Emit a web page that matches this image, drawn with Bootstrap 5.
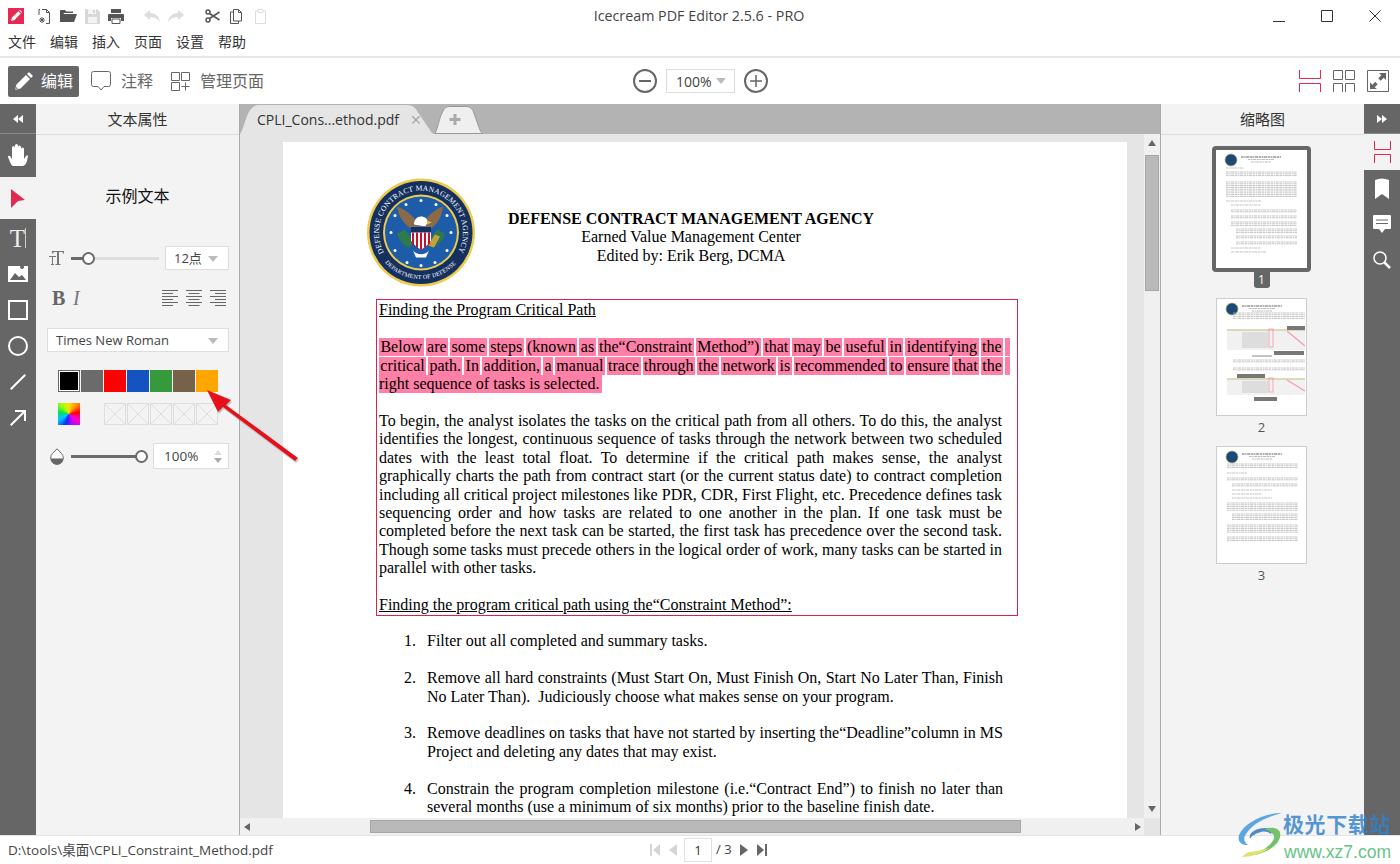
<!DOCTYPE html>
<html lang="zh-CN">
<head>
    <meta charset="UTF-8">
    <meta name="viewport" content="width=device-width, initial-scale=1.0">
    <title>Icecream PDF Editor</title>
    <link href="https://cdn.jsdelivr.net/npm/bootstrap@5.3.0/dist/css/bootstrap.min.css" rel="stylesheet">
    <style>
        html, body { height: 100%; overflow: hidden; }
        body { font-family: "Open Sans", "Noto Sans CJK SC", sans-serif; font-size: 14px; color: #333; background: #fff; }
        .app-shell { height: 864px; width: 1400px; position: relative; }
        svg { display: block; flex: none; }

        /* top */
        .top-head { height: 58px; border-bottom: 2px solid #e8e8e8; }
        .quick-row { height: 32px; padding-left: 8px; }
        .side-slot { flex: 1 1 0; }
        .app-title { font-size: 14.3px; color: #444; margin-left: 9px; }
        .win-btns { gap: 36px; padding-right: 19px; }
        .menu-row { gap: 14px; padding-left: 8px; font-size: 14px; line-height: 20px; color: #333; }
        .tool-row { height: 46px; padding: 0 11px 0 8px; }
        .edit-btn { width: 71px; height: 31px; background: #666; color: #fff; border-radius: 2px; font-size: 16px; padding-left: 6px; gap: 8px; }
        .tool-label { font-size: 16px; color: #666; }
        .zoom-minus { margin-left: 4px; }
        .zoom-sel { width: 69px; height: 24px; border: 1px solid #ddd; margin: 0 9px; padding-left: 9px; font-size: 14px; color: #444; }
        .caret-down { width: 0; height: 0; border-left: 5px solid transparent; border-right: 5px solid transparent; border-top: 6px solid #bbb; }

        /* side strips */
        .main-area { height: 731px; }
        .strip { width: 36px; background: #666; flex: none; }
        .strip-top { height: 30px; border-bottom: 1px solid #8a8a8a; }
        .strip-item { height: 36px; }
        .strip-on { background: #f3f3f3; }
        .t-glyph { font-family: "Liberation Serif", serif; font-size: 25px; line-height: 25px; color: #eee; }

        /* left panel */
        .prop-panel { width: 204px; flex: none; background: #f3f3f3; border-right: 1px solid #aaa; }
        .panel-head { height: 31px; border-bottom: 1px solid #ddd; font-size: 15px; color: #333; }
        .sample-text { margin-top: 38px; height: 45px; font-size: 16px; color: #111; }
        .prop-row { padding: 0 10px 0 11px; }
        .size-row { margin-top: 28px; height: 24px; }
        .sel-box { background: #fff; border: 1px solid #ddd; height: 24px; padding: 1px 10px 0 8px; font-size: 13px; color: #444; }
        .size-sel { width: 64px; }
        .track { height: 3px; background: #ddd; position: relative; }
        .track-fill { height: 100%; background: #6b6b6b; }
        .knob { position: absolute; top: -5px; width: 13px; height: 13px; border-radius: 50%; background: #fff; border: 2px solid #6b6b6b; }
        .style-row { margin-top: 16px; height: 24px; }
        .bold-mark { font-family: "Liberation Serif", serif; font-size: 20px; font-weight: 700; color: #666; width: 26px; padding-left: 5px; }
        .ital-mark { font-family: "Liberation Serif", serif; font-size: 20px; font-style: italic; color: #777; }
        .align-set { gap: 8px; margin-right: 3px; }
        .font-row { margin-top: 18px; }
        .swatch-rows { padding-left: 22px; }
        .swatch-line { gap: 1px; }
        .swatch-line.first-line { margin-top: 18px; }
        .swatch-line.second-line { margin-top: 11px; }
        .swatch { width: 22px; height: 22px; flex: none; }
        .swatch-picked { border: 1px solid #666; box-shadow: inset 0 0 0 1px #fff; }
        .swatch-rainbow { background: conic-gradient(#ffe000, #ff9000, #ff0000, #ff00c8, #c000ff, #0030ff, #00c8ff, #00e060, #a0ff00, #ffe000); margin-right: 23px; }
        .swatch-empty { border: 1px solid #ddd; background:
            linear-gradient(45deg, transparent 49%, #ddd 49%, #ddd 51%, transparent 51%),
            linear-gradient(-45deg, transparent 49%, #ddd 49%, #ddd 51%, transparent 51%); }
        .opacity-row { margin-top: 18px; height: 26px; }
        .pct-box { width: 76px; height: 26px; background: #fff; border: 1px solid #ddd; font-size: 13.500px; color: #444; padding: 0 6px 0 10px; }
        .spin-up { width: 0; height: 0; border-left: 4px solid transparent; border-right: 4px solid transparent; border-bottom: 5px solid #ddd; margin-bottom: 3px; }
        .spin-down { width: 0; height: 0; border-left: 4px solid transparent; border-right: 4px solid transparent; border-top: 5px solid #aaa; }

        /* document */
        .doc-col { width: 920px; flex: none; background: #e5e5e5; }
        .tab-strip { height: 30px; background: #b3b3b3; flex: none; }
        .doc-tab { width: 194px; height: 29px; margin-top: 1px; background: #e5e5e5; font-size: 14px; color: #333; padding-left: 17px;
            clip-path: path("M0 29 C4 24 6 8 12 3 C14 1 16 0 20 0 L166 0 C172 0 175 2 177 6 L190 25 C191 27 192 28 194 29 Z"); }
        .tab-close { color: #aaa; font-size: 14px; line-height: 1; margin-left: 11px; }
        .plus-tab { margin-left: 1px; margin-top: 2px; }
        .doc-mid { min-height: 0; }
        .page-view { overflow: hidden; background: #e5e5e5; padding: 8px 0 0 43px; }
        .pdf-page { width: 844px; min-height: 720px; background: #fff; font-family: "Liberation Serif", serif; font-size: 16px; line-height: 18.4px; color: #000; flex: none; }
        .letter-head { height: 157px; padding: 36px 0 0 84px; }
        .letter-lines { width: 432px; padding-top: 32px; text-align: center; }
        .letter-lines b { display: block; }
        .mark-box { margin-left: 93px; width: 642px; border: 1px solid #d9234c; padding: 1px 15px 1px 2px; }
        .first-title { margin-bottom: .6px; }
        .line-full { text-align: justify; text-align-last: justify; white-space: nowrap; }
        .line-blank { height: 18.4px; }
        .hl-line { display: flex; gap: 2px; margin-right: -8px; height: 18.4px; }
        .hl-line span { flex: 1 1 auto; background: #ff80a6; height: 18px; line-height: 18px; text-align: center; white-space: nowrap; }
        .hl-line span.hl-tail { flex: 0 0 5px; }
        .hl-short span { flex: none; padding-right: 2.3px; }
        .hl-short { gap: 0; }
        .under { text-decoration: underline; }
        .pdf-list { margin: 16px 0 0 121px; width: 599px; padding: 0; list-style: none; }
        .pdf-list li { position: relative; padding-left: 23px; margin-bottom: 18.4px; }
        .list-num { position: absolute; left: 0; }
        .vscroll { width: 16px; background: #f0f0f0; flex: none; padding-top: 6px; }
        .scroll-thumb { background: #b9b9b9; border: 1px solid #a6a6a6; }
        .vscroll .scroll-thumb { width: 14px; height: 136px; margin: 9px 0 0 1px; }
        .arr-up, .arr-down { width: 0; height: 0; border-left: 4px solid transparent; border-right: 4px solid transparent; margin-left: 4px; }
        .arr-up { border-bottom: 6px solid #666; }
        .arr-down { border-top: 6px solid #666; margin-top: auto; margin-bottom: 6px; }
        .hscroll { height: 17px; background: #f0f0f0; flex: none; }
        .hscroll .scroll-thumb { width: 651px; height: 13px; margin-left: 120px; }
        .arr-left, .arr-right { width: 0; height: 0; border-top: 4px solid transparent; border-bottom: 4px solid transparent; }
        .arr-left { border-right: 6px solid #666; margin-left: 4px; }
        .arr-right { border-left: 6px solid #666; margin-left: 114px; }
        .scroll-corner { width: 16px; background: #e5e5e5; margin-left: auto; height: 100%; }

        /* thumbnails */
        .thumb-panel { width: 204px; flex: none; background: #f3f3f3; border-left: 1px solid #aaa; }
        .thumb-list { padding: 11px 2px 0 0; }
        .thumb-frame { width: 99px; height: 126px; border: 4px solid #666; border-radius: 4px; background: #fff; }
        .thumb-flag { width: 16px; height: 16px; background: #666; color: #fff; font-size: 12px; line-height: 15px; text-align: center; border-radius: 0 0 3px 3px; margin-bottom: 10px; }
        .thumb-plain { width: 91px; height: 118px; border: 1px solid #ccc; background: #fff; }
        .thumb-num { font-size: 13px; line-height: 20px; height: 30px; color: #555; padding-top: 1px; }

        /* status */
        .status-row { height: 29px; border-top: 1px solid #e4e4e4; padding-left: 8px; font-size: 13.500px; color: #444; }
        .pager { gap: 0; margin-left: 642px; position: absolute; left: 8px; font-size: 13px; }
        .page-input { width: 28px; height: 24px; border: 1px solid #e0e0e0; text-align: center; line-height: 22px; margin: 0 4px 0 6px; color: #333; }

        /* overlays */
        .note-arrow { position: absolute; left: 200px; top: 385px; pointer-events: none; }
        .water-mark { position: absolute; left: 1238px; top: 811px; width: 160px; height: 52px; pointer-events: none; }
        .water-cn { position: absolute; left: 45px; top: 0; font-size: 21px; line-height: 26px; font-weight: 700; letter-spacing: 0.6px; color: rgba(48, 128, 205, .82); white-space: nowrap; }
        .water-en { position: absolute; left: 46px; top: 30px; font-family: "Liberation Sans", sans-serif; font-size: 17.5px; line-height: 22px; color: #66c488; white-space: nowrap; }
    </style>
</head>
<body>
<div class="app-shell d-flex flex-column">

    <div class="top-head">
        <div class="quick-row d-flex align-items-center">
            <div class="side-slot d-flex align-items-center">
                <svg width="16" height="16" viewBox="0 0 16 16"><rect width="16" height="16" fill="#e8294f"/><path d="M3 13l.8-3.2 6.6-6.6 2.4 2.4-6.6 6.6z" fill="#fff"/><path d="M11 2.6l1-1 2.400 2.400-1 1z" fill="#fbd"/></svg>
                <svg style="margin-left:14px" width="12" height="15" viewBox="0 0 12 15" fill="none" stroke="#555"><path d="M4 .5h4.500L11.500 3.500V14.500H8M1 6V.5h1M11.500 3.500H8.500V.5"/><path d="M4 8v6M1 11h6M2 9l4 4M6 9l-4 4" stroke-width="1"/></svg>
                <svg style="margin-left:10px" width="17" height="14" viewBox="0 0 17 14"><path d="M0 13V1.500Q0 1 .5 1H5l1.500 1.500H13V4H4L1.200 10 3.500 5H17l-3 8z" fill="#555"/></svg>
                <svg style="margin-left:8px" width="15" height="15" viewBox="0 0 15 15"><path d="M0 0h12l3 3v12H0z" fill="#d8d8d8"/><path d="M3 0h8v5H3zM3 8h9v6H3z" fill="#f4f4f4"/><path d="M8 1h2v3H8z" fill="#d8d8d8"/></svg>
                <svg style="margin-left:8px" width="16" height="15" viewBox="0 0 16 15"><path d="M3 0h10v4H3zM1 5h14q1 0 1 1v6h-3V9H3v3H0V6q0-1 1-1z" fill="#555"/><path d="M4 10h8v4.500H4z" fill="none" stroke="#555"/></svg>
                <svg style="margin-left:20px" width="16" height="12" viewBox="0 0 16 12"><path d="M6 0L0 5l6 5V7c4 0 7 1 10 5C15 6 11 3 6 3z" fill="#ddd"/></svg>
                <svg style="margin-left:8px" width="16" height="12" viewBox="0 0 16 12"><path d="M10 0l6 5-6 5V7C6 7 3 8 0 12 1 6 5 3 10 3z" fill="#ddd"/></svg>
                <svg style="margin-left:21px" width="15" height="14" viewBox="0 0 15 14" fill="none" stroke="#555" stroke-width="1.500"><circle cx="3" cy="3" r="2"/><circle cx="3" cy="11" r="2"/><path d="M4.500 4.500L14.500 11M4.500 9.500L14.500 3"/></svg>
                <svg style="margin-left:10px" width="12" height="15" viewBox="0 0 12 15" fill="none" stroke="#555"><path d="M3.500 .5h5l3 3v8.500h-8zM8.500 .5v3h3M3.500 3H.5v11.500h8V12"/></svg>
                <svg style="margin-left:13px" width="11" height="15" viewBox="0 0 11 15" fill="none" stroke="#ddd"><path d="M3 2H.5v12.500h10V2H8M3 .5h5V3.500H3z"/></svg>
            </div>
            <div class="app-title">Icecream PDF Editor 2.5.6 - PRO</div>
            <div class="side-slot d-flex justify-content-end win-btns align-items-center">
                <svg width="12" height="12" viewBox="0 0 12 12"><path d="M0 11.500h12" stroke="#333"/></svg>
                <svg width="12" height="12" viewBox="0 0 12 12"><path d="M.5.5h11v11H.5z" fill="none" stroke="#333"/></svg>
                <svg width="12" height="12" viewBox="0 0 12 12"><path d="M.5.5l11 11M11.500.5l-11 11" stroke="#333"/></svg>
            </div>
        </div>
        <div class="menu-row d-flex"><span>文件</span><span>编辑</span><span>插入</span><span>页面</span><span>设置</span><span>帮助</span></div>
    </div>

    <div class="tool-row d-flex align-items-center">
        <div class="side-slot d-flex align-items-center">
            <div class="edit-btn d-flex align-items-center">
                <svg width="19" height="19" viewBox="0 0 19 19"><path d="M1 18l1.500-5.500L12 3l4 4-9.500 9.500z" fill="#fff"/><path d="M13 2l1.500-1.500q.5-.5 1 0l3 3q.5.5 0 1L17 6z" fill="#fff"/><path d="M1 18l1-3.500 2.500 2.500z" fill="#999"/></svg>
                <span>编辑</span>
            </div>
            <svg style="margin-left:12px" width="20" height="20" viewBox="0 0 20 20" fill="none" stroke="#666"><path d="M2.500.5h15q2 0 2 2v11q0 2-2 2h-4.500L10 19 7 15.500H2.500q-2 0-2-2v-11q0-2 2-2z"/></svg>
            <span class="tool-label" style="margin-left:10px">注释</span>
            <svg style="margin-left:18px" width="19" height="19" viewBox="0 0 19 19" fill="none" stroke="#666"><path d="M.5.5h8v8h-8zM10.500.5h8v8h-8zM.5 10.500h8v8h-8zM14.500 10.500v8M10.500 14.500h8"/></svg>
            <span class="tool-label" style="margin-left:10px">管理页面</span>
        </div>
        <svg class="zoom-minus" width="24" height="24" viewBox="0 0 24 24" fill="none" stroke="#666" stroke-width="2"><circle cx="12" cy="12" r="11"/><path d="M6 12h12"/></svg>
        <div class="zoom-sel d-flex align-items-center justify-content-between pe-2"><span>100%</span><span class="caret-down"></span></div>
        <svg width="24" height="24" viewBox="0 0 24 24" fill="none" stroke="#666" stroke-width="2"><circle cx="12" cy="12" r="11"/><path d="M12 6v12M6 12h12" stroke-width="1.500"/></svg>
        <div class="side-slot d-flex justify-content-end align-items-center gap-2">
            <svg width="22" height="22" viewBox="0 0 22 22" fill="none" stroke="#e2294f"><path d="M.5 0v8.500h21V0M.5 22v-8.500h21V22"/></svg>
            <svg style="margin-left:4px" width="22" height="22" viewBox="0 0 22 22" fill="none" stroke="#666"><path d="M.5.5h9v9h-9zM12.500.5h9v9h-9zM.5 22v-8.500h9V22M12.500 22v-8.500h9V22"/></svg>
            <svg style="margin-left:4px" width="22" height="22" viewBox="0 0 22 22"><path d="M.5.5h21v21H.5z" fill="none" stroke="#666"/><path d="M12 3h7v7l-2.300-2.300-3 3-2.400-2.400 3-3zM3 19v-6.500l2.300 2.300 3-3 2.400 2.400-3 3L10 19z" fill="#666"/></svg>
        </div>
    </div>

    <div class="main-area d-flex">
        <!-- left tool strip -->
        <div class="strip">
            <div class="strip-top d-flex align-items-center justify-content-center">
                <svg width="10" height="8" viewBox="0 0 10 8"><path d="M5 0v8L0 4zM10 0v8L5 4z" fill="#fff"/></svg>
            </div>
            <div class="d-flex align-items-center justify-content-center" style="height:43px">
                <svg width="20" height="23" viewBox="0 0 20 23"><path d="M5 22q-2-1-3-4L0 13q0-2 2-1l2 3V4q0-2 1.500-2T7 4V1.500Q7 0 8.500 0T10 1.500V3q0-1.500 1.500-1.500T13 3v2q0-1.500 1.500-1.500T16 5v10l2-3q1.500-1.500 2 0l-1 5q-1 4-4 5z" fill="#fff"/></svg>
            </div>
            <div class="strip-on d-flex align-items-center justify-content-center" style="height:42px">
                <svg width="14" height="19" viewBox="0 0 14 19"><path d="M0 0l14 11-7 1-7 7z" fill="#e2294f"/></svg>
            </div>
            <div class="strip-item d-flex align-items-center justify-content-center" style="margin-top:1px"><span class="t-glyph">T</span><svg width="1" height="20"><path d="M.5 0v20" stroke="#ccc"/></svg></div>
            <div class="strip-item d-flex align-items-center justify-content-center">
                <svg width="20" height="16" viewBox="0 0 20 16"><path d="M0 0h20v16H0z" fill="#fff"/><path d="M2 14l5-7 4 4 3-2 4 5zM14 3a2 2 0 1 1 .1 0z" fill="#666"/></svg>
            </div>
            <div class="strip-item d-flex align-items-center justify-content-center">
                <svg width="20" height="20" viewBox="0 0 20 20"><path d="M1 1h18v18H1z" fill="none" stroke="#fff" stroke-width="2"/></svg>
            </div>
            <div class="strip-item d-flex align-items-center justify-content-center">
                <svg width="20" height="20" viewBox="0 0 20 20"><circle cx="10" cy="10" r="9" fill="none" stroke="#fff" stroke-width="2"/></svg>
            </div>
            <div class="strip-item d-flex align-items-center justify-content-center">
                <svg width="16" height="16" viewBox="0 0 16 16"><path d="M.7 15.300L15.300.7" stroke="#fff" stroke-width="2"/></svg>
            </div>
            <div class="strip-item d-flex align-items-center justify-content-center">
                <svg width="16" height="16" viewBox="0 0 16 16" fill="none" stroke="#fff" stroke-width="2"><path d="M.7 15.300L14.500 1.500M5 1h10v10"/></svg>
            </div>
        </div>

        <!-- text properties -->
        <div class="prop-panel">
            <div class="panel-head d-flex align-items-center justify-content-center">文本属性</div>
            <div class="sample-text d-flex align-items-center justify-content-center">示例文本</div>
            <div class="prop-row size-row d-flex align-items-center">
                <svg width="16" height="14" viewBox="0 0 16 14" style="margin-left:2px"><path d="M3 0h12v2.500h-1L13.500 1H10v12h1.500v1h-5v-1H8V1H5L4 2.500H3zM0 5h7v1H4v7h1v1H2v-1h1V6H0z" fill="#777"/></svg>
                <div class="track" style="width:88px;margin-left:6px"><div class="track-fill" style="width:17px"></div><div class="knob" style="left:11px"></div></div>
                <div class="sel-box size-sel d-flex align-items-center justify-content-between ms-auto"><span>12点</span><span class="caret-down"></span></div>
            </div>
            <div class="prop-row style-row d-flex align-items-center">
                <span class="bold-mark">B</span><span class="ital-mark">I</span>
                <div class="align-set d-flex ms-auto">
                    <svg width="16" height="16" viewBox="0 0 16 16"><path d="M0 .5h16M0 3.500h11M0 6.500h16M0 9.500h11M0 12.500h16M0 15.500h11" stroke="#666"/></svg>
                    <svg width="16" height="16" viewBox="0 0 16 16"><path d="M0 .5h16M2.500 3.500h11M0 6.500h16M2.500 9.500h11M0 12.500h16M2.500 15.500h11" stroke="#666"/></svg>
                    <svg width="16" height="16" viewBox="0 0 16 16"><path d="M0 .5h16M5 3.500h11M0 6.500h16M5 9.500h11M0 12.500h16M5 15.500h11" stroke="#666"/></svg>
                </div>
            </div>
            <div class="prop-row font-row">
                <div class="sel-box d-flex align-items-center justify-content-between"><span>Times New Roman</span><span class="caret-down"></span></div>
            </div>
            <div class="swatch-rows">
                <div class="swatch-line first-line d-flex">
                    <div class="swatch swatch-picked" style="background-color:#000"></div>
                    <div class="swatch" style="background-color:#6b6b6b"></div>
                    <div class="swatch" style="background-color:#ff0000"></div>
                    <div class="swatch" style="background-color:#1554c0"></div>
                    <div class="swatch" style="background-color:#369a3c"></div>
                    <div class="swatch" style="background-color:#76624a"></div>
                    <div class="swatch" style="background-color:#ffa500"></div>
                </div>
                <div class="swatch-line second-line d-flex">
                    <div class="swatch swatch-rainbow"></div>
                    <div class="swatch swatch-empty"></div>
                    <div class="swatch swatch-empty"></div>
                    <div class="swatch swatch-empty"></div>
                    <div class="swatch swatch-empty"></div>
                    <div class="swatch swatch-empty"></div>
                </div>
            </div>
            <div class="prop-row opacity-row d-flex align-items-center">
                <svg width="14" height="17" viewBox="0 0 14 17" style="margin-left:3px"><path d="M7 .8L2.500 5.500A6.300 6.300 0 1 0 11.500 5.500z" fill="#fff" stroke="#666"/><path d="M.8 10.500a6.200 6.200 0 0 0 12.400 0z" fill="#666"/></svg>
                <div class="track" style="width:70px;margin-left:7px;background:#6b6b6b"><div class="knob" style="left:64px"></div></div>
                <div class="pct-box d-flex align-items-center justify-content-between ms-auto"><span>100%</span><span class="d-flex flex-column"><span class="spin-up"></span><span class="spin-down"></span></span></div>
            </div>
        </div>

        <!-- document -->
        <div class="doc-col d-flex flex-column">
            <div class="tab-strip d-flex">
                <div class="doc-tab d-flex align-items-center"><span>CPLI_Cons...ethod.pdf</span><span class="tab-close">✕</span></div>
                <svg class="plus-tab" width="48" height="28" viewBox="0 0 48 28"><path d="M0 27.500C3 22 4 12 8 5 10 1 12 .5 16 .5h15c3 0 5 1 7 4l6 17c1 3 2 5 4 6z" fill="#efefef" stroke="#999"/><path d="M14.500 13.500h11M20 8v11" stroke="#aaa" stroke-width="3"/></svg>
            </div>
            <div class="doc-mid d-flex flex-grow-1">
                <div class="page-view flex-grow-1">
                    <div class="pdf-page">
                        <div class="letter-head d-flex">
                            <svg width="108" height="109" viewBox="0 0 108 108">
                                <defs>
                                    <path id="sealTop" d="M17 74A42 42 0 1 1 91 74"/>
                                    <path id="sealBottom" d="M18 84A47.500 47.500 0 0 0 90 84"/>
                                </defs>
                                <circle cx="54" cy="54" r="54" fill="#eccb4e"/>
                                <circle cx="54" cy="54" r="51.500" fill="#14305f"/>
                                <circle cx="54" cy="54" r="38" fill="#eccb4e"/>
                                <circle cx="54" cy="54" r="36" fill="#1c5ca8"/>
                                <text font-family="Liberation Serif, serif" font-size="7.600" fill="#fff"><textPath href="#sealTop" textLength="172" lengthAdjust="spacing">DEFENSE CONTRACT MANAGEMENT AGENCY</textPath></text>
                                <text font-family="Liberation Serif, serif" font-size="6" fill="#fff"><textPath href="#sealBottom" textLength="80" lengthAdjust="spacing">DEPARTMENT OF DEFENSE</textPath></text>
                                <g fill="#fff">
                                    <circle cx="54" cy="22" r="1.500"/><circle cx="39" cy="26" r="1.500"/><circle cx="69" cy="26" r="1.500"/><circle cx="28" cy="37" r="1.500"/><circle cx="80" cy="37" r="1.500"/><circle cx="24" cy="54" r="1.500"/><circle cx="84" cy="54" r="1.500"/><circle cx="28" cy="72" r="1.500"/><circle cx="80" cy="72" r="1.500"/><circle cx="40" cy="84" r="1.500"/><circle cx="68" cy="84" r="1.500"/><circle cx="54" cy="87" r="1.500"/>
                                </g>
                                <path d="M50 52C42 50 33 44 30 28c7 2 18 10 21 18zM58 52c8-2 16-8 18-24-7 2-17 10-20 18z" fill="#8a6a48"/>
                                <path d="M30 55c2 7 7 13 13 14l4-5-9-13zM78 55c-2 7-7 13-13 14l-4-5 9-13z" fill="#2f7a4a"/>
                                <path d="M68 56l-7 11 6 2 6-11z" fill="#c4a23a"/>
                                <path d="M47 46c0-5 3-8 7-8s6 2 7 6l-3 4z" fill="#fff"/>
                                <path d="M60 42l5 2-5 2z" fill="#e2b838"/>
                                <path d="M44 48h20v14q-4 6-10 9-6-3-10-9z" fill="#fff"/>
                                <path d="M44 48h20v6H44z" fill="#14305f"/>
                                <path d="M46 54v12M50 54v15M54 54v17M58 54v15M62 54v12" stroke="#c8102e" stroke-width="2"/>
                                <path d="M46 72c4 5 12 5 16 0l-3 7h-10z" fill="#fff"/>
                            </svg>
                            <div class="letter-lines"><b>DEFENSE CONTRACT MANAGEMENT AGENCY</b>Earned Value Management Center<br>Edited by: Erik Berg, DCMA</div>
                        </div>
                        <div class="mark-box">
                            <div class="under first-title">Finding the Program Critical Path</div>
                            <div class="line-blank"></div>
                            <div class="hl-line"><span>Below</span><span>are</span><span>some</span><span>steps</span><span>(known</span><span>as</span><span>the“Constraint</span><span>Method”)</span><span>that</span><span>may</span><span>be</span><span>useful</span><span>in</span><span>identifying</span><span>the</span><span class="hl-tail"></span></div>
                            <div class="hl-line"><span>critical</span><span>path.</span><span>In</span><span>addition,</span><span>a</span><span>manual</span><span>trace</span><span>through</span><span>the</span><span>network</span><span>is</span><span>recommended</span><span>to</span><span>ensure</span><span>that</span><span>the</span><span class="hl-tail"></span></div>
                            <div class="hl-line hl-short"><span>right sequence of tasks is selected.</span></div>
                            <div class="line-blank"></div>
                            <div class="line-full">To begin, the analyst isolates the tasks on the critical path from all others. To do this, the analyst</div>
                            <div class="line-full">identifies the longest, continuous sequence of tasks through the network between two scheduled</div>
                            <div class="line-full">dates with the least total float. To determine if the critical path makes sense, the analyst</div>
                            <div class="line-full">graphically charts the path from contract start (or the current status date) to contract completion</div>
                            <div class="line-full">including all critical project milestones like PDR, CDR, First Flight, etc. Precedence defines task</div>
                            <div class="line-full">sequencing order and how tasks are related to one another in the plan. If one task must be</div>
                            <div class="line-full">completed before the next task can be started, the first task has precedence over the second task.</div>
                            <div class="line-full">Though some tasks must precede others in the logical order of work, many tasks can be started in</div>
                            <div>parallel with other tasks.</div>
                            <div class="line-blank"></div>
                            <div class="under">Finding the program critical path using the“Constraint Method”:</div>
                        </div>
                        <ol class="pdf-list">
                            <li><span class="list-num">1.</span>Filter out all completed and summary tasks.</li>
                            <li><span class="list-num">2.</span><div class="line-full">Remove all hard constraints (Must Start On, Must Finish On, Start No Later Than, Finish</div><div>No Later Than).&nbsp; Judiciously choose what makes sense on your program.</div></li>
                            <li><span class="list-num">3.</span><div class="line-full">Remove deadlines on tasks that have not started by inserting the“Deadline”column in MS</div><div>Project and deleting any dates that may exist.</div></li>
                            <li><span class="list-num">4.</span><div class="line-full">Constrain the program completion milestone (i.e.“Contract End”) to finish no later than</div><div>several months (use a minimum of six months) prior to the baseline finish date.</div></li>
                        </ol>
                    </div>
                </div>
                <div class="vscroll d-flex flex-column">
                    <div class="arr-up"></div>
                    <div class="scroll-thumb"></div>
                    <div class="arr-down"></div>
                </div>
            </div>
            <div class="hscroll d-flex align-items-center">
                <div class="arr-left"></div>
                <div class="scroll-thumb"></div>
                <div class="arr-right"></div>
                <div class="scroll-corner"></div>
            </div>
        </div>

        <!-- thumbnails -->
        <div class="thumb-panel">
            <div class="panel-head d-flex align-items-center justify-content-center">缩略图</div>
            <div class="thumb-list d-flex flex-column align-items-center">
                <div class="thumb-frame"><svg class="thumb-svg" data-page="1" width="91" height="118" viewBox="0 0 91 118"></svg></div>
                <div class="thumb-flag">1</div>
                <div class="thumb-plain"><svg class="thumb-svg" data-page="2" width="89" height="116" viewBox="0 0 89 116"></svg></div>
                <div class="thumb-num">2</div>
                <div class="thumb-plain"><svg class="thumb-svg" data-page="3" width="89" height="116" viewBox="0 0 89 116"></svg></div>
                <div class="thumb-num">3</div>
            </div>
        </div>

        <!-- right strip -->
        <div class="strip">
            <div class="strip-top d-flex align-items-center justify-content-center">
                <svg width="10" height="8" viewBox="0 0 10 8"><path d="M0 0v8l5-4zM5 0v8l5-4z" fill="#fff"/></svg>
            </div>
            <div class="strip-on d-flex align-items-center justify-content-center" style="height:36px">
                <svg width="17" height="22" viewBox="0 0 17 22" fill="none" stroke="#e2294f"><path d="M.5 0v8.500h16V0M.5 22v-8.500h16V22"/></svg>
            </div>
            <div class="d-flex align-items-center justify-content-center" style="height:36px">
                <svg width="14" height="21" viewBox="0 0 14 21"><path d="M0 2q7-3 14 0v19l-7-5-7 5z" fill="#fff"/></svg>
            </div>
            <div class="d-flex align-items-center justify-content-center" style="height:35px">
                <svg width="18" height="18" viewBox="0 0 18 18"><path d="M1 0h16q1 0 1 1v12q0 1-1 1h-5l-3 4-3-4H1q-1 0-1-1V1q0-1 1-1z" fill="#fff"/><path d="M3 5h12M3 8.500h12" stroke="#666"/></svg>
            </div>
            <div class="d-flex align-items-center justify-content-center" style="height:38px">
                <svg width="18" height="18" viewBox="0 0 18 18" fill="none" stroke="#fff"><circle cx="7" cy="7" r="6" stroke-width="1.500"/><path d="M11.500 11.500l5.500 5.500" stroke-width="2.500"/></svg>
            </div>
        </div>
    </div>

    <div class="status-row d-flex align-items-center position-relative">
        <span>D:\tools\桌面\CPLI_Constraint_Method.pdf</span>
        <div class="pager d-flex align-items-center">
            <svg width="10" height="12" viewBox="0 0 10 12"><path d="M0 0h2v12H0zM10 0v12L3 6z" fill="#d5d5d5"/></svg>
            <svg style="margin-left:8px" width="10" height="12" viewBox="0 0 10 12"><path d="M9 0v12L1 6z" fill="#d5d5d5"/></svg>
            <div class="page-input">1</div>
            <span>/ 3</span>
            <svg style="margin-left:7px" width="10" height="12" viewBox="0 0 10 12"><path d="M1 0v12l8-6z" fill="#666"/></svg>
            <svg style="margin-left:8px" width="10" height="12" viewBox="0 0 10 12"><path d="M0 0v12l7-6zM8 0h2v12H8z" fill="#666"/></svg>
        </div>
    </div>

    <!-- annotation arrow over the panel -->
    <svg class="note-arrow" width="104" height="84" viewBox="200 385 104 84">
        <path d="M207 390l24 10-5 5 72 53-3 3-72-54-5 5z" fill="#888" opacity=".45" transform="translate(1 2)"/>
        <path d="M207 390l24 10-5 5 72 53-3 3-72-54-5 5z" fill="#e5101a"/>
    </svg>

    <!-- watermark -->
    <div class="water-mark">
        <svg width="46" height="44" viewBox="0 0 46 44" style="position:absolute;left:0;top:2px">
            <path d="M44 0C26 0 6 10 1 22c-2 7 3 10 9 10-4-3-5-7-2-11C14 11 28 4 44 0z" fill="#5ca7e0"/>
            <path d="M12 26c-2-6 6-11 15-11 6 0 8 3 6 6-2-2-6-3-10-2-4 1-9 3-11 7z" fill="#4c8ac8"/>
            <path d="M26 16c10-3 18 0 16 8-2 9-14 16-26 18 8-4 18-10 20-17 1-4-4-7-10-9z" fill="#74c26c"/>
            <path d="M4 44c8 0 20-3 27-9-6 1-14 4-20 4-3 1-5 3-7 5z" fill="#e2e070"/>
        </svg>
        <div class="water-cn">极光下载站</div>
        <div class="water-en">www.xz7.com</div>
    </div>
</div>

<script src="https://cdn.jsdelivr.net/npm/bootstrap@5.3.0/dist/js/bootstrap.bundle.min.js"></script>
<script>
    // thumbnails: grey bars standing in for the shrunk page text
    // each block is [y, line count, x, width]
    const thumbPages = {
        1: { blocks: [[18,1,10,18],[22,3,10,71],[32,9,10,71],[51,1,10,35],[55,1,15,30],[60,2,15,66],[66,2,15,66],[72,3,15,66],[79,3,20,61],[86,2,20,61],[92,2,20,61],[98,1,15,30],[102,1,15,35]] },
        2: { blocks: [[14,4,16,72],[61,2,16,72],[69,2,16,72]], rects: true },
        3: { blocks: [[17,3,10,71],[26,1,10,20],[31,2,10,71],[37,2,15,66],[43,1,15,40],[47,1,15,30],[51,1,15,40],[56,5,10,71],[67,4,15,66],[78,5,10,71],[90,3,10,71]] }
    };

    function grayLine(x1, y, x2, color, width, dash) {
        const d = dash ? ' stroke-dasharray="2.600 .6 1.400 .5 3.200 .6"' : '';
        return `<path d="M${x1} ${y}H${x2}" stroke="${color}" stroke-width="${width}"${d}/>`;
    }

    function drawThumb(svg) {
        const page = thumbPages[svg.dataset.page];
        let out = '';
        // header on every page
        out += '<circle cx="15" cy="10" r="6" fill="#1c4a78" stroke="#b8a860" stroke-width=".7"/>';
        out += grayLine(25, 7, 65, '#666', 1, true) + grayLine(32, 9.500, 58, '#aaa', .8, true) + grayLine(35, 12, 55, '#aaa', .8, true);

        page.blocks.forEach(b => {
            for (let i = 0; i < b[1]; i++) {
                out += grayLine(b[2], b[0] + i * 1.8, b[2] + b[3], '#b4b4b4', .8, true);
            }
        });

        if (page.rects) {
            // the two chart screenshots of page 2
            [[30, 21], [79, 17]].forEach(r => {
                out += `<rect x="10" y="${r[0]}" width="78" height="${r[1]}" fill="#f1f1f1"/>`;
                out += `<rect x="10" y="${r[0]}" width="78" height="2" fill="#ddd8b8"/>`;
                out += `<rect x="25" y="${r[0] + 3}" width="26" height="${r[1] - 5}" fill="#ddd"/>`;
                out += `<rect x="52" y="${r[0]}" width="4" height="${r[1] - 3}" fill="none" stroke="#f08a9a" stroke-width=".7"/>`;
                out += `<path d="M70 ${r[0] + 2}l18 ${r[1] - 6}" stroke="#f59aae" stroke-width="1.200"/>`;
            });
            out += '<rect x="70" y="27" width="18" height="4" fill="#777"/>';
            out += '<rect x="57" y="52" width="30" height="4" fill="#777"/>';
            out += '<rect x="20" y="75" width="28" height="4" fill="#777"/>';
            out += '<rect x="37" y="98" width="23" height="4" fill="#777"/>';
            out += grayLine(35, 57, 55, '#888', 1);
        }
        svg.innerHTML = out;
    }

    document.querySelectorAll('.thumb-svg').forEach(drawThumb);
</script>
</body>
</html>
